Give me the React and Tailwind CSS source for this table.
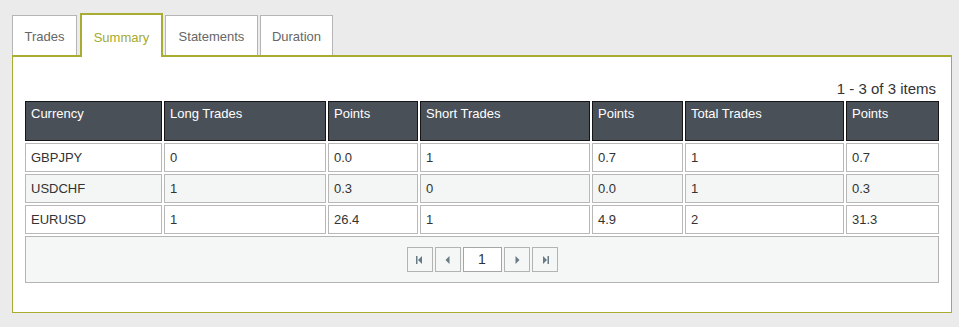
import React from 'react';

const tabs = [
  { label: 'Trades', w: 'w-[65px]' },
  { label: 'Summary', w: 'w-[83px]', active: true },
  { label: 'Statements', w: 'w-[93px]' },
  { label: 'Duration', w: 'w-[73px]' },
];

const columns = ['Currency', 'Long Trades', 'Points', 'Short Trades', 'Points', 'Total Trades', 'Points'];

const rows = [
  ['GBPJPY', '0', '0.0', '1', '0.7', '1', '0.7'],
  ['USDCHF', '1', '0.3', '0', '0.0', '1', '0.3'],
  ['EURUSD', '1', '26.4', '1', '4.9', '2', '31.3'],
];

function PagerIcon({ kind }) {
  return (
    <svg width="12" height="12" viewBox="0 0 12 12" className="fill-[#687b85]">
      {kind === 'first' && (
        <>
          <rect x="2" y="2" width="1.5" height="8" />
          <path d="M8 2 L4 6 L8 10 Z" />
        </>
      )}
      {kind === 'prev' && <path d="M7.5 2 L3.5 6 L7.5 10 Z" />}
      {kind === 'next' && <path d="M4.5 2 L8.5 6 L4.5 10 Z" />}
      {kind === 'last' && (
        <>
          <path d="M4 2 L8 6 L4 10 Z" />
          <rect x="8.5" y="2" width="1.5" height="8" />
        </>
      )}
    </svg>
  );
}

function PagerButton({ kind }) {
  return (
    <button className="w-[26px] h-[25px] border border-[#b3b3b3] flex items-center justify-center bg-transparent">
      <PagerIcon kind={kind} />
    </button>
  );
}

export default function App() {
  return (
    <div className="w-[959px] h-[327px] bg-[#ebebeb] pl-[12px] pt-[13px] font-['Liberation_Sans',Arial,sans-serif] text-[#333]">
      {/* tab strip */}
      <div className="flex items-end h-[42px]">
        {tabs.map((t, i) =>
          t.active ? (
            <div
              key={t.label}
              className={`${t.w} h-[44px] -mb-[2px] relative z-10 bg-white border-2 border-b-0 border-[#a8ad32] flex items-center justify-center pt-[3px] text-[13px] text-[#a5aa2e] ml-[3px] mr-[2px]`}
            >
              {t.label}
            </div>
          ) : (
            <div
              key={t.label}
              className={`${t.w} h-[40px] bg-white border border-b-0 border-[#b5b5b5] flex items-center justify-center pt-[3px] text-[13px] text-[#666] ${i === 2 ? 'mr-[2px]' : ''}`}
            >
              {t.label}
            </div>
          )
        )}
      </div>

      {/* panel */}
      <div className="w-[940px] h-[258px] bg-white border border-t-2 border-[#a8ad32] px-[12px] pt-[23px]">
        <div className="text-right text-[15px] leading-[18px] pr-[3px] mb-[3px]">1 - 3 of 3 items</div>

        <div className="grid grid-cols-[137px_162px_90px_170px_91px_159px_93px] gap-[2px] text-[13px]">
          {columns.map((c, i) => (
            <div
              key={i}
              className="h-[40px] bg-[#4a5058] border border-[#151515] text-white leading-[16px] pl-[5px] pt-[4px]"
            >
              {c}
            </div>
          ))}

          {rows.map((r, ri) =>
            r.map((v, ci) => (
              <div
                key={`${ri}-${ci}`}
                className={`h-[29px] border border-[#b8b8b8] flex items-center pl-[5px] text-[#333] ${
                  ri === 1 ? 'bg-[#f4f6f5]' : 'bg-white'
                }`}
              >
                {v}
              </div>
            ))
          )}

          {/* pager */}
          <div className="col-span-7 h-[47px] bg-[#f5f7f6] border border-[#b3b3b3] flex items-center justify-center gap-[2px]">
            <PagerButton kind="first" />
            <PagerButton kind="prev" />
            <div className="w-[39px] h-[25px] bg-white border border-[#a5a5a5] flex items-center justify-center text-[14px] text-[#333]">
              1
            </div>
            <PagerButton kind="next" />
            <PagerButton kind="last" />
          </div>
        </div>
      </div>
    </div>
  );
}
